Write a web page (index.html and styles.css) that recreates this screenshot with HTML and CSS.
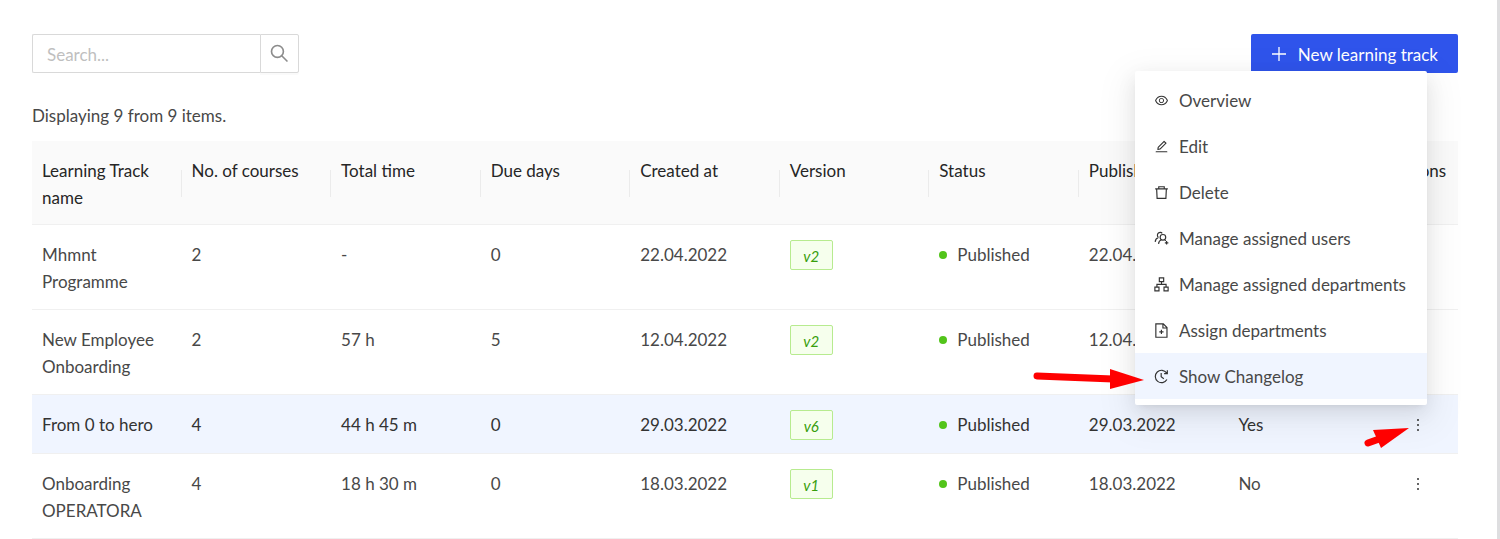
FILE: index.html
```html
<!DOCTYPE html>
<html lang="en">
<head>
<meta charset="utf-8">
<meta name="viewport" content="width=device-width, initial-scale=1">
<title>Learning tracks</title>
<link rel="stylesheet" href="styles.css">
</head>
<body>
<main class="page">
  <header class="toolbar">
    <form class="search" role="search">
      <input class="search-input" type="text" placeholder="Search..." aria-label="Search">
      <button class="search-button" type="button" aria-label="Search">
        <svg class="search-icon" viewBox="0 0 1024 1024"><circle cx="412" cy="412" r="290"/><path d="M620 620l280 280"/></svg>
      </button>
    </form>
    <button class="primary-button" type="button">
      <svg class="plus-icon" viewBox="0 0 16 16"><path d="M8 1v14M1 8h14"/></svg>
      <span>New learning track</span>
    </button>
  </header>

  <p class="summary">Displaying 9 from 9 items.</p>

  <table class="tracks">
    <colgroup><col span="9"><col class="col-actions"></colgroup>
    <thead>
      <tr><th>Learning Track name</th><th>No. of courses</th><th>Total time</th><th>Due days</th><th>Created at</th><th>Version</th><th>Status</th><th>Published at</th><th></th><th class="actions">Actions</th></tr>
    </thead>
    <tbody>
      <tr>
        <td>Mhmnt Programme</td><td>2</td><td>-</td><td>0</td><td>22.04.2022</td>
        <td><span class="tag">v2</span></td><td><span class="status">Published</span></td><td>22.04.2022</td><td></td>
        <td class="actions"><button class="more" type="button" aria-label="Actions"><svg viewBox="0 0 4 16"><circle cx="2" cy="3" r="1"/><circle cx="2" cy="8" r="1"/><circle cx="2" cy="13" r="1"/></svg></button></td>
      </tr>
      <tr>
        <td>New Employee Onboarding</td><td>2</td><td>57 h</td><td>5</td><td>12.04.2022</td>
        <td><span class="tag">v2</span></td><td><span class="status">Published</span></td><td>12.04.2022</td><td></td>
        <td class="actions"><button class="more" type="button" aria-label="Actions"><svg viewBox="0 0 4 16"><circle cx="2" cy="3" r="1"/><circle cx="2" cy="8" r="1"/><circle cx="2" cy="13" r="1"/></svg></button></td>
      </tr>
      <tr class="active">
        <td>From 0 to hero</td><td>4</td><td>44 h 45 m</td><td>0</td><td>29.03.2022</td>
        <td><span class="tag">v6</span></td><td><span class="status">Published</span></td><td>29.03.2022</td><td>Yes</td>
        <td class="actions"><button class="more" type="button" aria-label="Actions"><svg viewBox="0 0 4 16"><circle cx="2" cy="3" r="1"/><circle cx="2" cy="8" r="1"/><circle cx="2" cy="13" r="1"/></svg></button></td>
      </tr>
      <tr>
        <td>Onboarding OPERATORA</td><td>4</td><td>18 h 30 m</td><td>0</td><td>18.03.2022</td>
        <td><span class="tag">v1</span></td><td><span class="status">Published</span></td><td>18.03.2022</td><td>No</td>
        <td class="actions"><button class="more" type="button" aria-label="Actions"><svg viewBox="0 0 4 16"><circle cx="2" cy="3" r="1"/><circle cx="2" cy="8" r="1"/><circle cx="2" cy="13" r="1"/></svg></button></td>
      </tr>
    </tbody>
  </table>

  <div class="menu" role="menu">
    <button class="menu-item" role="menuitem" type="button">
      <svg class="icon solid" viewBox="0 0 1024 1024"><path d="M942.2 486.2C847.4 286.5 704.1 186 512 186c-192.2 0-335.4 100.5-430.2 300.3a60.3 60.3 0 0 0 0 51.5C176.6 737.5 319.9 838 512 838c192.2 0 335.4-100.5 430.2-300.3 7.7-16.2 7.7-35 0-51.5zM512 766c-161.3 0-279.4-81.8-362.7-254C232.6 339.8 350.7 258 512 258c161.3 0 279.4 81.8 362.7 254C791.5 684.2 673.4 766 512 766zm-4-430c-97.2 0-176 78.8-176 176s78.8 176 176 176 176-78.8 176-176-78.8-176-176-176zm0 288c-61.9 0-112-50.1-112-112s50.1-112 112-112 112 50.1 112 112-50.1 112-112 112z"/></svg>
      Overview
    </button>
    <button class="menu-item" role="menuitem" type="button">
      <svg class="icon solid" viewBox="0 0 1024 1024"><path d="M257.7 752c2 0 4-.2 6-.5L431.9 722c2-.4 3.9-1.3 5.3-2.8l423.9-423.9a9.96 9.96 0 0 0 0-14.1L694.9 114.9c-1.9-1.9-4.4-2.9-7.1-2.9s-5.2 1-7.1 2.9L256.8 538.8c-1.5 1.5-2.4 3.3-2.8 5.3l-29.5 168.2a33.5 33.5 0 0 0 9.4 29.8c6.6 6.4 14.9 9.9 23.8 9.9zm67.4-174.4L687.8 215l73.3 73.3-362.7 362.6-88.9 15.7 15.6-89zM880 836H144c-17.7 0-32 14.3-32 32v36c0 4.4 3.6 8 8 8h784c4.4 0 8-3.6 8-8v-36c0-17.7-14.3-32-32-32z"/></svg>
      Edit
    </button>
    <button class="menu-item" role="menuitem" type="button">
      <svg class="icon" viewBox="0 0 1024 1024"><path d="M80 260h864M324 260V120h376v140M180 260l32 650h600l32-650"/></svg>
      Delete
    </button>
    <button class="menu-item" role="menuitem" type="button">
      <svg class="icon" viewBox="0 0 1024 1024"><circle cx="610" cy="430" r="190"/><path d="M310 880c10-150 90-250 200-285M715 590c35 25 65 55 85 90M560 160C500 80 380 70 300 140c-90 80-90 220 0 300M300 440C170 490 90 590 80 740M860 690v240M740 810h240"/></svg>
      Manage assigned users
    </button>
    <button class="menu-item" role="menuitem" type="button">
      <svg class="icon" viewBox="0 0 1024 1024"><path d="M364 60h296v260H364zM60 690h280v260H60zM684 690h280v260H684zM512 320v185M200 690V505h624v185"/></svg>
      Manage assigned departments
    </button>
    <button class="menu-item" role="menuitem" type="button">
      <svg class="icon" viewBox="0 0 1024 1024"><path d="M126 60h510l250 250v664H126zM610 60v280h276M506 460v290M361 605h290"/></svg>
      Assign departments
    </button>
    <button class="menu-item current" role="menuitem" type="button">
      <svg class="icon" viewBox="0 0 1024 1024"><path d="M862 270A424 424 0 1 0 882 720M910 90v230H690M490 270v260l180 130"/></svg>
      Show Changelog
    </button>
  </div>

  <svg class="pointer pointer-menu" viewBox="0 0 112 24"><path class="shaft" d="M4 8l76 3"/><path class="head" d="M77 1l34 11-34 9z"/></svg>
  <svg class="pointer pointer-more" viewBox="0 0 46 24"><path class="shaft" d="M4 17l14-5"/><path class="head" d="M9 4l36-2-28 20z"/></svg>
</main>
</body>
</html>
```
FILE: styles.css
```css
* { box-sizing: border-box; }

body {
  margin: 0;
  background: #fff;
  color: #484848;
  font: 17px/27px Lato, sans-serif;
}

button, input { font: inherit; }

.page {
  position: relative;
  min-height: 100vh;
  padding: 34px 39px 0 32px;
  border-right: 3px solid #dedee0;
  overflow: hidden;
}

.toolbar { display: flex; justify-content: space-between; }

.search { display: flex; width: 267px; height: 39px; }

.search-input {
  flex: 1;
  min-width: 0;
  padding: 1px 14px 0;
  border: 1px solid #d9d9d9;
  border-right: 0;
  border-radius: 2px 0 0 2px;
  background: #fff;
  color: inherit;
}
.search-input::placeholder { color: #bfbfbf; opacity: 1; }

.search-button {
  display: grid;
  place-items: center;
  width: 39px;
  padding: 0;
  border: 1px solid #d9d9d9;
  border-radius: 0 2px 2px 0;
  background: #fff;
  box-shadow: 0 2px 0 rgba(0, 0, 0, .02);
}
.search-icon { width: 21px; height: 21px; fill: none; stroke: #8c8c8c; stroke-width: 80; }

.primary-button {
  display: flex;
  align-items: center;
  gap: 11px;
  height: 39px;
  padding: 1px 20px 0;
  border: 0;
  border-radius: 2px;
  background: #2f54eb;
  color: #fff;
}
.plus-icon { width: 16px; height: 16px; fill: none; stroke: #fff; stroke-width: 1.3; }

.summary { margin: 29px 0 12px; }

.tracks {
  width: 100%;
  table-layout: fixed;
  border-collapse: separate;
  border-spacing: 0;
}
.col-actions { width: 80px; }

.tracks th, .tracks td {
  padding: 16px 10px 14px;
  border-bottom: 1px solid #f0f0f0;
  text-align: left;
  vertical-align: top;
}
.tracks th {
  position: relative;
  padding-bottom: 13px;
  background: #fafafa;
  color: #262626;
  font-weight: 400;
}
.tracks th:not(:last-child)::after {
  content: "";
  position: absolute;
  top: 29px;
  right: 0;
  width: 1px;
  height: 27px;
  background: #ebebeb;
}
.tracks .active td { background: #f0f5ff; color: #333; }
.tracks .actions { text-align: center; }

.tag {
  display: block;
  width: 43px;
  height: 30px;
  margin: -1px 0;
  border: 1px solid #b7eb8f;
  border-radius: 2px;
  background: #f6ffed;
  color: #389e0d;
  font-size: 15px;
  font-style: italic;
  line-height: 30px;
  text-align: center;
}

.status { display: flex; align-items: center; gap: 10px; }
.status::before {
  content: "";
  width: 8px;
  height: 8px;
  border-radius: 50%;
  background: #52c41a;
}

.more { display: block; width: 20px; height: 27px; margin: 0 auto; padding: 0; border: 0; background: none; }
.more svg { display: block; width: 4px; height: 16px; margin: auto; fill: #333; }

.menu {
  position: absolute;
  top: 71px;
  right: 70px;
  width: 292px;
  padding: 6px 0;
  border-radius: 2px;
  background: #fff;
  box-shadow: 0 4px 7px -5px rgba(0, 0, 0, .12), 0 7px 19px rgba(0, 0, 0, .08), 0 11px 34px 10px rgba(0, 0, 0, .05);
}
.menu-item {
  display: flex;
  align-items: center;
  gap: 10px;
  width: 100%;
  height: 46px;
  padding: 0 19px;
  border: 0;
  background: none;
  color: #484848;
  white-space: nowrap;
}
.menu-item.current { background: #f0f5ff; }

.icon { flex: none; width: 15px; height: 15px; fill: none; stroke: #333; stroke-width: 80; }
.icon.solid { fill: #333; stroke: none; }

.pointer { position: absolute; fill: none; }
.pointer .shaft { stroke: #f00; stroke-width: 7; stroke-linecap: round; }
.pointer .head { fill: #f00; }
.pointer-menu { top: 368px; right: 352px; width: 112px; height: 24px; }
.pointer-more { top: 426px; right: 87px; width: 46px; height: 24px; }
```
